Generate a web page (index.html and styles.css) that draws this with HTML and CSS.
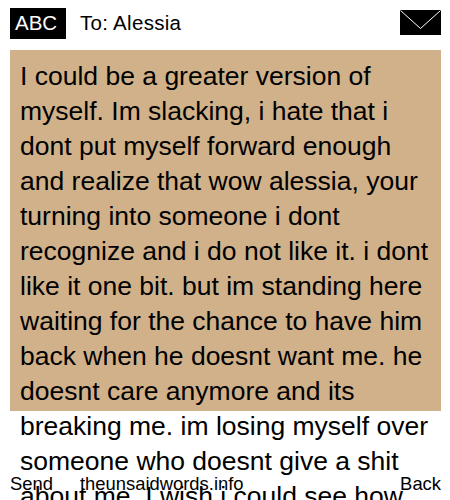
FILE: index.html
```html
<!DOCTYPE html>
<html lang="en">
<head>
    <meta charset="UTF-8">
    <meta name="viewport" content="width=device-width, initial-scale=1.0">
    <title>To: Alessia</title>
    <link rel="stylesheet" href="styles.css">
</head>
<body>
    <div class="header">
        <div class="mode">ABC</div>
        <div class="to">To: Alessia</div>
        <svg class="envelope" width="41" height="25" viewBox="0 0 41 25">
            <rect width="41" height="25" fill="#000"/>
            <path d="M0.5 0.5 L20.5 18.5 L40.5 0.5" fill="none" stroke="#fff" stroke-width="1"/>
        </svg>
    </div>
    <div class="message">
        <p>I could be a greater version of myself. Im slacking, i hate that i dont put myself forward enough and realize that wow alessia, your turning into someone i dont recognize and i do not like it. i dont like it one bit. but im standing here waiting for the chance to have him back when he doesnt want me. he doesnt care anymore and its breaking me. im losing myself over someone who doesnt give a shit about me. I wish i could see how</p>
    </div>
    <div class="footer">
        <span class="send">Send</span>
        <span class="site">theunsaidwords.info</span>
        <span class="back">Back</span>
    </div>
</body>
</html>
```

FILE: styles.css
```css
html, body {
    height: 500px;
    overflow: hidden;
}
body {
    margin: 0;
    position: relative;
    font-family: "Liberation Sans", Arial, sans-serif;
    color: #000;
    background-color: #fff;
}
.header {
    display: flex;
    align-items: center;
    height: 31px;
    padding: 8px 9px 11px 10px;
}
.mode {
    width: 51px;
    height: 31px;
    padding-left: 5px;
    line-height: 30px;
    font-size: 20.5px;
    color: #fff;
    background-color: #000;
}
.to {
    margin-left: 14px;
    margin-bottom: 1px;
    font-size: 20.5px;
    letter-spacing: 0.3px;
}
.envelope {
    margin-left: auto;
    margin-bottom: 2px;
}
.message {
    height: 361px;
    margin: 0 9px 0 10px;
    padding: 9px 10px 0;
    box-sizing: border-box;
    background-color: #d0b18a;
}
.message p {
    margin: 0;
    font-size: 26.5px;
    line-height: 35px;
}
.footer {
    position: absolute;
    left: 10px;
    right: 9px;
    top: 473px;
    display: flex;
    font-size: 18.4px;
    line-height: 21px;
}
.site {
    margin-left: 27px;
}
.back {
    margin-left: auto;
}
```
